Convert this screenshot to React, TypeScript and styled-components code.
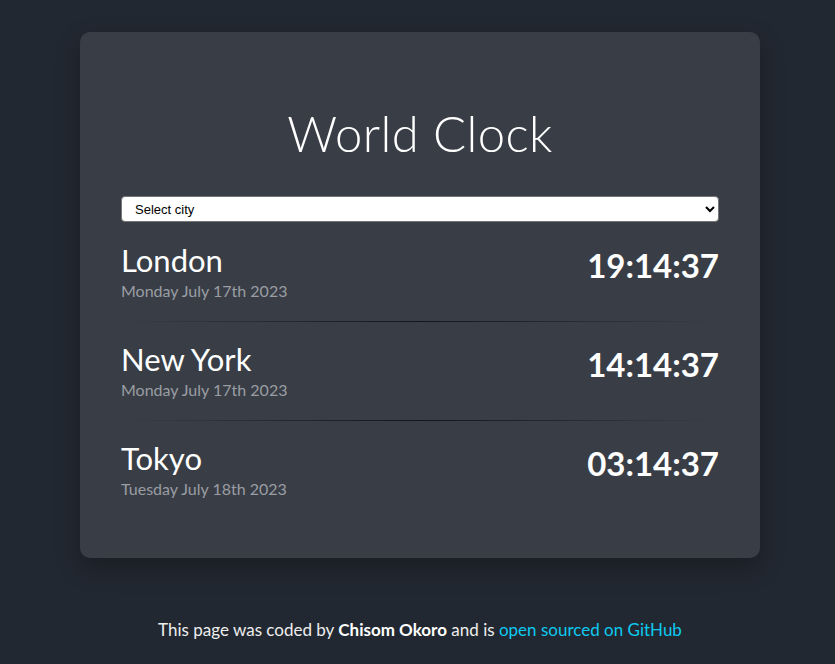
import React from "react";
import styled, { createGlobalStyle } from "styled-components";

const Global = createGlobalStyle`
  html, body { margin: 0; padding: 0; background: #222831; }
  body { font-family: Lato, "Noto Sans", sans-serif; color: #ffffff; }
`;

const Page = styled.div`
  padding: 32px 0 0 80px;
  min-height: 664px;
  box-sizing: border-box;
`;

const Card = styled.main`
  width: 680px;
  box-sizing: border-box;
  background: #393e46;
  border-radius: 10px;
  box-shadow: 0 10px 25px rgba(0, 0, 0, 0.25);
  padding: 72px 41px 59px;
`;

const Title = styled.h1`
  margin: 0 0 34px;
  text-align: center;
  font-family: Lato, sans-serif;
  font-weight: 300;
  font-size: 49px;
  line-height: 58px;
  letter-spacing: 0.4px;
`;

const Select = styled.select`
  display: block;
  width: 100%;
  height: 26px;
  font-family: "Liberation Sans", Arial, sans-serif;
  font-size: 13px;
  padding: 0 9px;
  border-radius: 4px;
  border: 1px solid #767676;
  background: #fff;
  color: #000;
  margin-bottom: 1px;
`;

const Row = styled.div<{ $last?: boolean }>`
  display: flex;
  justify-content: space-between;
  align-items: flex-start;
  padding: 19px 0 ${(p) => (p.$last ? "0" : "21px")};
  position: relative;
  &::after {
    content: "";
    display: ${(p) => (p.$last ? "none" : "block")};
    position: absolute;
    left: 0;
    right: 0;
    bottom: 0;
    height: 1px;
    background: linear-gradient(to right, rgba(20, 22, 30, 0), #14161e 50%, rgba(20, 22, 30, 0));
  }
`;

const City = styled.div`
  display: flex;
  flex-direction: column;
`;

const CityName = styled.h2`
  margin: 0;
  font-family: Lato, sans-serif;
  font-weight: 400;
  font-size: 31px;
  line-height: 36px;
`;

const CityDate = styled.div`
  font-family: Lato, sans-serif;
  font-size: 16px;
  line-height: 20px;
  color: #9a9da3;
  margin-top: 3px;
`;

const Time = styled.div`
  font-family: Lato, sans-serif;
  font-weight: 700;
  font-size: 33px;
  line-height: 36px;
  margin-top: 5px;
`;

const Footer = styled.footer`
  margin-top: 62px;
  margin-left: -80px;
  padding-left: 5px;
  text-align: center;
  font-family: Lato, sans-serif;
  font-size: 17px;
  line-height: 20px;
  color: #eeeeee;
  strong { font-weight: 700; color: #fff; }
  a { color: #0dcaf0; text-decoration: none; }
`;

const cities = [
  { name: "London", date: "Monday July 17th 2023", time: "19:14:37" },
  { name: "New York", date: "Monday July 17th 2023", time: "14:14:37" },
  { name: "Tokyo", date: "Tuesday July 18th 2023", time: "03:14:37" },
];

export default function App() {
  return (
    <>
      <Global />
      <Page>
        <Card>
          <Title>World Clock</Title>
          <Select defaultValue="">
            <option value="">Select city</option>
            <option value="paris">Paris</option>
            <option value="sydney">Sydney</option>
          </Select>
          {cities.map((c, i) => (
            <Row key={c.name} $last={i === cities.length - 1}>
              <City>
                <CityName>{c.name}</CityName>
                <CityDate>{c.date}</CityDate>
              </City>
              <Time>{c.time}</Time>
            </Row>
          ))}
        </Card>
        <Footer>
          This page was coded by <strong>Chisom Okoro</strong> and is{" "}
          <a href="#">open sourced on GitHub</a>
        </Footer>
      </Page>
    </>
  );
}
